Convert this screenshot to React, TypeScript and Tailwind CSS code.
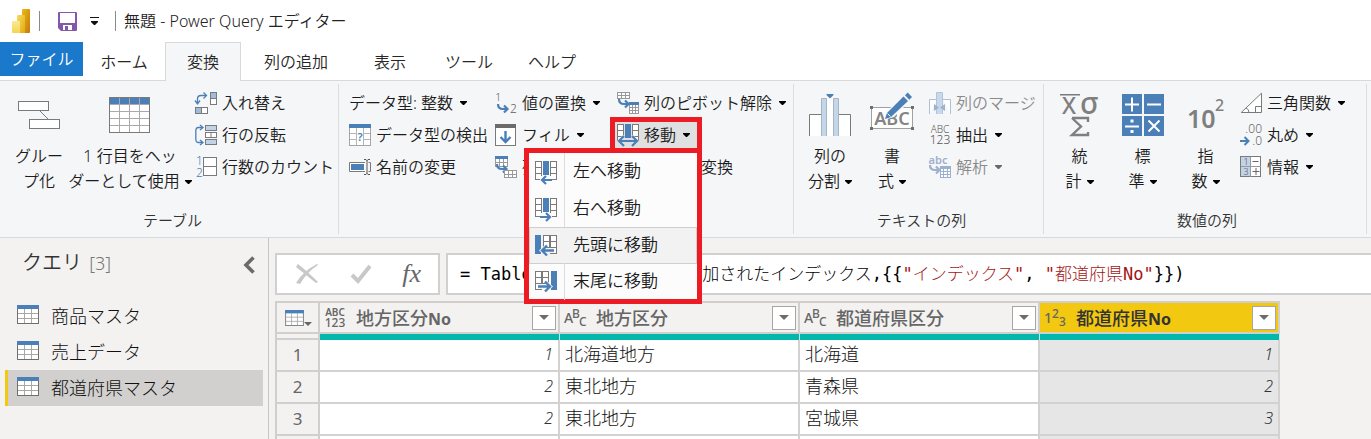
import type { ReactNode } from "react";
import clsx from "clsx";

const BLUE = "#4a7fb8";
const GRAY = "#7a7a7a";

function Svg({ w = 22, h = 22, children }: { w?: number; h?: number; children: ReactNode }) {
  return (
    <svg width={w} height={h} viewBox={`0 0 ${w} ${h}`} fill="none" aria-hidden="true" className="shrink-0 overflow-visible">
      {children}
    </svg>
  );
}

function Caret({ className = "text-black" }: { className?: string }) {
  return (
    <svg width="7" height="4" viewBox="0 0 7 4" aria-hidden="true" className={clsx("shrink-0", className)}>
      <path d="M0 0h7v1L4 4H3L0 1z" fill="currentColor" />
    </svg>
  );
}

/* ---------- title bar ---------- */

function PowerBiLogo() {
  return (
    <Svg w={18} h={24}>
      <defs>
        <linearGradient id="b1" x1="0" y1="0" x2="1" y2="1">
          <stop offset="0" stopColor="#ebbb14" />
          <stop offset="1" stopColor="#c5780c" />
        </linearGradient>
        <linearGradient id="b2" x1="0" y1="0" x2="1" y2="1">
          <stop offset="0" stopColor="#f7dc5c" />
          <stop offset="1" stopColor="#e3a90e" />
        </linearGradient>
        <linearGradient id="b3" x1="0" y1="0" x2="0" y2="1">
          <stop offset="0" stopColor="#faea98" />
          <stop offset="1" stopColor="#f5d450" />
        </linearGradient>
      </defs>
      <rect x="10" width="8" height="24" rx="1" fill="url(#b1)" />
      <path d="M6 6h6q1 0 1 1v17H5V7q0-1 1-1z" fill="url(#b2)" />
      <path d="M1 12h6q1 0 1 1v11H1q-1 0-1-1V13q0-1 1-1z" fill="url(#b3)" />
    </Svg>
  );
}

function SaveIcon() {
  return (
    <Svg w={19} h={19}>
      <path d="M1 0h17q1 0 1 1v17q0 1-1 1H3l-3-3V1q0-1 1-1z" fill="#8557ab" />
      <path d="M2 1h15v10H2z" fill="#fff" />
      <path d="M5 13h9v5H5z" fill="#fff" />
      <path d="M7 14h3v4H7z" fill="#8557ab" />
    </Svg>
  );
}

/* ---------- large ribbon icons ---------- */

function GroupIcon() {
  return (
    <Svg w={42} h={42}>
      <path d="M22 17l9 9" stroke={GRAY} />
      <rect x=".5" y="7.500" width="30" height="9" fill="#fff" stroke={GRAY} />
      <rect x="11.500" y="25.500" width="30" height="9" fill="#fff" stroke={GRAY} />
    </Svg>
  );
}

function HeaderTableIcon() {
  return (
    <Svg w={42} h={42}>
      <rect x=".5" y="3.500" width="40" height="35" fill="#fff" stroke={GRAY} />
      <path d="M1 4h39v6H1z" fill={BLUE} />
      <path d="M10.500 4v34M20.500 4v34M30.500 4v34M1 10.500h39M1 17.500h39M1 24.500h39M1 31.500h39" stroke="#a9a9a9" />
      <rect x=".5" y="3.500" width="40" height="35" stroke={GRAY} />
    </Svg>
  );
}

function SplitIcon() {
  return (
    <Svg w={42} h={42}>
      <path d="M0.500 42V20.500H12V42z" fill="#fff" />
      <path d="M30 42V20.500h11.500V42z" fill="#fff" />
      <path d="M.5 42V20.500H12M30 20.500h11.500V42" stroke={GRAY} />
      <path d="M12 5h6v37h-6zM24 5h6v37h-6z" fill="#c3d6ea" />
      <path d="M12.500 42V4.500h5V42M24.500 42V4.500h5V42" stroke="#a9b4c0" />
      <path d="M18 5h6v37h-6z" fill="#fff" />
      <path d="M17.500 0h7v1L21.500 4h-1L17.500 1z" fill={BLUE} />
    </Svg>
  );
}

function FormatIcon() {
  return (
    <Svg w={46} h={42}>
      <rect x="2.500" y="13.500" width="41" height="21" fill="#fff" stroke="#a0a0a0" />
      <path d="M1 12h3v3H1zM42 12h3v3h-3zM1 33h3v3H1zM42 33h3v3h-3z" fill="#6f6f6f" />
      <text x="23" y="31" textAnchor="middle" fontFamily="Noto Sans" fontSize="18" fontWeight="600" fill="#858585">ABC</text>
      <path d="M15 26l3-9L34 2l6 6-15 15z" fill="#f5f6f8" />
      <path d="M16 25l2-6L34.500 2.500 39 7 22 23z" fill={BLUE} />
      <path d="M36 1.200L38.700-1.500 43 3l-2.700 2.700z" fill={BLUE} />
      <path d="M18.500 19.500l3 3" stroke="#fff" />
    </Svg>
  );
}

function StatsIcon() {
  return (
    <Svg w={42} h={42}>
      <path d="M1 .75h20" stroke={GRAY} strokeWidth="1.500" />
      <text x="3" y="20" fontFamily="Noto Sans" fontSize="23" fontWeight="500" fill="#7f7f7f">X</text>
      <text x="21" y="20" fontFamily="Noto Sans" fontSize="30" fontWeight="500" fill="#7f7f7f">σ</text>
      <path d="M13 24h16v4M29 38v3H13l9-8.500L13 24" stroke="#7f7f7f" strokeWidth="2.400" />
    </Svg>
  );
}

function StandardIcon() {
  return (
    <Svg w={42} h={42}>
      <path d="M0 0h20v20H0zM22 0h20v20H22zM0 22h20v20H0zM22 22h20v20H22z" fill={BLUE} />
      <path d="M10 3.500v14M3 10.500h14M25 10.500h14M3 32.500h14M26.500 26.500l11 11M37.500 26.500l-11 11" stroke="#fff" strokeWidth="2" />
      <path d="M8.500 25.500h3v3h-3zM8.500 36h3v3h-3z" fill="#fff" />
    </Svg>
  );
}

function PowerIcon() {
  return (
    <Svg w={42} h={42}>
      <text x="2" y="34" fontFamily="Noto Sans" fontSize="25" fontWeight="600" fill="#7f7f7f">10</text>
      <text x="30" y="17" fontFamily="Noto Sans" fontSize="16" fontWeight="500" fill="#7f7f7f">2</text>
    </Svg>
  );
}

/* ---------- small ribbon icons ---------- */

function TransposeIcon() {
  return (
    <Svg>
      <path d="M2.500 11V7Q2.500 3.500 6 3.500h5" stroke={BLUE} strokeWidth="1.300" />
      <path d="M0 8.500L2.500 12 5 8.500M8.500.5l3 3-3 3" stroke={BLUE} strokeWidth="1.300" />
      <rect x="15.500" y=".5" width="6" height="12" fill="#fff" stroke={GRAY} />
      <path d="M16 1h5v5h-5z" fill="#9fbcdb" />
      <path d="M15 6.500h7" stroke={GRAY} />
      <rect x=".5" y="15.500" width="12" height="6" fill="#fff" stroke={GRAY} />
      <path d="M1 16h5v5H1z" fill="#9fbcdb" />
      <path d="M6.500 15v7" stroke={GRAY} />
    </Svg>
  );
}

function ReverseIcon() {
  return (
    <Svg>
      <path d="M7 3.500H3.500Q.8 3.500.8 7v8q0 3.500 2.700 3.500H7" stroke={BLUE} strokeWidth="1.300" />
      <path d="M5 1l3 2.500L5 6M5 16l3 2.500L5 21" stroke={BLUE} strokeWidth="1.300" />
      <rect x="10.500" y="1.500" width="11" height="5" fill="#c1d3e7" stroke={GRAY} />
      <rect x="10.500" y="8.500" width="11" height="5" fill="#fff" stroke={GRAY} />
      <path d="M16 8v6" stroke={GRAY} />
      <rect x="10.500" y="15.500" width="11" height="5" fill="#c1d3e7" stroke={GRAY} />
    </Svg>
  );
}

function CountIcon() {
  return (
    <Svg>
      <text x="1" y="9" fontFamily="Noto Sans" fontSize="12" fill={BLUE}>1</text>
      <text x="1" y="21" fontFamily="Noto Sans" fontSize="12" fill={BLUE}>2</text>
      <rect x="8.500" y="1.500" width="13" height="18" fill="#fff" stroke={GRAY} />
      <path d="M8 10.500h14" stroke={GRAY} />
    </Svg>
  );
}

function DetectIcon() {
  return (
    <Svg>
      <rect x=".5" y="1.500" width="21" height="20" fill="#fff" stroke="#a5a5a5" />
      <path d="M7.500 4v17M14.500 4v17M1 9.500h20M1 15.500h20" stroke="#b5b5b5" />
      <path d="M0 0h22v4H0z" fill={BLUE} />
      <path d="M8 7h6v12H8z" fill="#fff" />
      <text x="11" y="17" textAnchor="middle" fontFamily="Noto Sans" fontSize="11" fontWeight="600" fill={BLUE}>?</text>
    </Svg>
  );
}

function RenameIcon() {
  return (
    <Svg>
      <path d="M16 6.500H.5v9H16" fill="#fff" stroke={GRAY} />
      <path d="M2 8h13v6H2z" fill={BLUE} />
      <path d="M15 3.500h2l1 1 1-1h2M15 18.500h2l1-1 1 1h2M18 4v14" stroke="#555" />
      <path d="M19.500 6.500h2v9h-2" stroke={GRAY} />
    </Svg>
  );
}

function CurvedArrow({ x, y, color = BLUE }: { x: number; y: number; color?: string }) {
  return (
    <g transform={`translate(${x} ${y})`}>
      <path d="M1 0q0 5 5 5h4" stroke={color} strokeWidth="2.200" />
      <path d="M7 1.500l3.500 3.500L7 8.500" stroke={color} strokeWidth="2.200" />
    </g>
  );
}

function ReplaceIcon() {
  return (
    <Svg>
      <text x="0" y="9" fontFamily="Noto Sans" fontSize="11" fill="#5f5f5f">1</text>
      <text x="15" y="21" fontFamily="Noto Sans" fontSize="12" fill="#5f5f5f">2</text>
      <CurvedArrow x={2} y={12} />
    </Svg>
  );
}

function FillIcon() {
  return (
    <Svg>
      <rect x=".5" y=".5" width="20" height="21" fill="#fff" stroke={GRAY} />
      <path d="M0 0h21v4H0z" fill="#6b6b6b" />
      <path d="M10.500 7v11M5.500 13l5 5 5-5" stroke={BLUE} strokeWidth="2.400" />
    </Svg>
  );
}

function PivotIcon() {
  return (
    <Svg>
      <rect x=".5" y="1.500" width="12" height="9" fill="#fff" stroke="#999" />
      <path d="M4.500 3v8M8.500 3v8M1 6.500h12" stroke="#999" />
      <path d="M0 0h13v3H0z" fill={BLUE} />
      <CurvedArrow x={1} y={8} />
      <rect x="9.500" y="14.500" width="12" height="7" fill="#fff" stroke="#999" />
      <path d="M13.500 15v7M17.500 15v7M10 18.500h12" stroke="#999" />
    </Svg>
  );
}

function UnpivotIcon() {
  return (
    <Svg>
      <rect x=".5" y=".5" width="12" height="6" fill="#fff" stroke="#999" />
      <path d="M4.500 0v7M8.500 0v7M0 3.500h13" stroke="#999" />
      <CurvedArrow x={1} y={7} />
      <rect x="12.500" y="11.500" width="9" height="10" fill="#fff" stroke="#999" />
      <path d="M15.500 12v10M18.500 12v10M13 15.500h9M13 18.500h9" stroke="#999" />
      <path d="M12 10h10v3H12z" fill={BLUE} />
    </Svg>
  );
}

function SideCells({ x }: { x: number }) {
  return (
    <g stroke={GRAY}>
      <rect x={x + 0.5} y=".5" width="6" height="18" fill="#fff" />
      <path d={`M${x} 6.500h7M${x} 12.500h7`} />
    </g>
  );
}

function MoveIcon({ dir }: { dir: "both" | "left" | "right" }) {
  return (
    <Svg>
      <SideCells x={0} />
      <SideCells x={15} />
      <path d="M8 0h6v14H8z" fill={BLUE} />
      {dir === "both" && (
        <>
          <path d="M0 17l6-6h2v3h6v-3h2l6 6v5H0z" fill="#dfe0e0" />
          <path d="M2 17h18M7 12l-5 5 5 5M15 12l5 5-5 5" stroke={BLUE} strokeWidth="2.200" />
        </>
      )}
      {dir === "left" && (
        <>
          <path d="M5 15h12v7H5z" fill="#fcfcfc" />
          <path d="M7 19h10M11 15l-4 4 4 4" stroke={BLUE} strokeWidth="2.200" />
        </>
      )}
      {dir === "right" && (
        <>
          <path d="M5 15h12v7H5z" fill="#fcfcfc" />
          <path d="M5 19h10M11 15l4 4-4 4" stroke={BLUE} strokeWidth="2.200" />
        </>
      )}
    </Svg>
  );
}

function MoveEndIcon({ dir }: { dir: "start" | "end" }) {
  return (
    <Svg>
      <g transform={dir === "end" ? "translate(22 0) scale(-1 1)" : undefined}>
        <path d="M0 0h6v19H0z" fill={BLUE} />
        <rect x="8.500" y=".5" width="6" height="12" fill="#fff" stroke={GRAY} />
        <rect x="15.500" y=".5" width="6" height="18" fill="#fff" stroke={GRAY} />
        <path d="M8 6.500h14M15 12.500h7" stroke={GRAY} />
        <path d="M4 15.500L11 9v4h8v5h-8v4z" fill="#f4f4f4" />
        <path d="M7 15.500h12M12 10.500l-5 5 5 5" stroke={BLUE} strokeWidth="2.400" />
      </g>
    </Svg>
  );
}

function MergeIcon() {
  return (
    <Svg>
      <path d="M.5 22V7.500H8M14 7.500h7.500V22" fill="#fff" stroke="#aebfd6" />
      <path d="M7.500 22V.5h6V22" fill="#c9d8ea" stroke="#b3c4da" />
      <path d="M5 12v7l5-3.500zM16 12v7l-5-3.500z" fill="#9db3cf" />
    </Svg>
  );
}

function ExtractIcon() {
  return (
    <Svg>
      <text x="11" y="9" textAnchor="middle" fontFamily="Noto Sans" fontSize="10" fill="#555">ABC</text>
      <text x="11" y="20" textAnchor="middle" fontFamily="Noto Sans" fontSize="12" fill="#555">123</text>
    </Svg>
  );
}

function ParseIcon() {
  return (
    <Svg>
      <text x="9" y="8" textAnchor="middle" fontFamily="Noto Sans" fontSize="11" fontWeight="600" fill="#9db0cd">abc</text>
      <CurvedArrow x={0} y={9} color="#9db0cd" />
      <rect x="11.500" y="11.500" width="10" height="10" fill="#fff" stroke="#9db0cd" />
      <path d="M14.500 12v10M18.500 12v10M12 15.500h10M12 18.500h10" stroke="#9db0cd" />
      <path d="M11 10h11v3H11z" fill="#9db0cd" />
    </Svg>
  );
}

function TrigIcon() {
  return (
    <Svg>
      <path d="M1.200 20.500L21.500 1.200v19.300z" fill="#fff" stroke={GRAY} />
      <path d="M15.500 20v-5.500h6M6 16q3 1 3 4.500" stroke={GRAY} />
    </Svg>
  );
}

function RoundIcon() {
  return (
    <Svg>
      <text x="22" y="9" textAnchor="end" fontFamily="Noto Sans" fontSize="12" fill="#666">.00</text>
      <text x="22" y="21" textAnchor="end" fontFamily="Noto Sans" fontSize="12" fill="#666">.0</text>
      <path d="M0 17h8M4.500 13l4 4-4 4" stroke={BLUE} strokeWidth="2" />
    </Svg>
  );
}

function InfoIcon() {
  return (
    <Svg>
      <rect x=".5" y=".5" width="20" height="20" fill="#fff" stroke={GRAY} />
      <path d="M1 1h10v19H1z" fill="#c1d3e7" />
      <path d="M10.500 1v20M1 10.500h20" stroke="#9a9a9a" />
      <text x="6" y="9" textAnchor="middle" fontFamily="Noto Sans" fontSize="9" fill="#555">1</text>
      <text x="6" y="19" textAnchor="middle" fontFamily="Noto Sans" fontSize="9" fill="#555">3</text>
      <path d="M12.500 5.500h6M12.500 15.500h7M16 12v7" stroke="#666" />
    </Svg>
  );
}

/* ---------- table glyphs ---------- */

function QueryIcon({ w = 22, h = 19 }: { w?: number; h?: number }) {
  return (
    <svg width={w} height={h} viewBox="0 0 22 19" fill="none" aria-hidden="true" className="shrink-0">
      <rect x=".5" y=".5" width="21" height="18" fill="#fff" stroke="#6f6f6f" />
      <path d="M7.500 4v14M14.500 4v14M1 8.500h20M1 13.500h20" stroke="#a8a8a8" />
      <path d="M0 0h22v4H0z" fill={BLUE} />
    </svg>
  );
}

type Kind = "any" | "text" | "int";

function TypeIcon({ kind }: { kind: Kind }) {
  if (kind === "any") {
    return (
      <Svg w={23} h={22}>
        <text x="11" y="9" textAnchor="middle" fontFamily="Noto Sans" fontSize="10" fontWeight="600" fill="#666">ABC</text>
        <text x="11" y="20" textAnchor="middle" fontFamily="Noto Sans" fontSize="12" fontWeight="500" fill="#666">123</text>
      </Svg>
    );
  }
  const [a, b, c] = kind === "text" ? ["A", "B", "C"] : ["1", "2", "3"];
  return (
    <Svg w={23} h={22}>
      <text x="0" y="16" fontFamily="Noto Sans" fontSize="14" fontWeight="500" fill="#666">{a}</text>
      <text x="8" y="11" fontFamily="Noto Sans" fontSize="12" fontWeight="500" fill="#666">{b}</text>
      <text x="15" y="19" fontFamily="Noto Sans" fontSize="12" fontWeight="500" fill="#666">{c}</text>
    </Svg>
  );
}

/* ---------- ribbon parts ---------- */

function RibbonGroup({ label, title, className, children }: { label: string; title?: string; className: string; children: ReactNode }) {
  return (
    <section
      aria-label={label}
      className={clsx("my-[3px] flex shrink-0 flex-col border-r border-[#dcdddf]", className)}
    >
      <div className="flex flex-1 items-start">{children}</div>
      {title && <h2 className="mt-3.5 mb-0.5 text-center text-[15px] leading-6 text-[#333]">{title}</h2>}
    </section>
  );
}

function LargeButton({ icon, lines, menu, className }: { icon: ReactNode; lines: [string, string]; menu?: boolean; className: string }) {
  return (
    <button type="button" className={clsx("mt-2.5 flex shrink-0 flex-col items-center whitespace-nowrap leading-[25px]", className)}>
      <span className="mb-2">{icon}</span>
      <span>{lines[0]}</span>
      <span className="flex items-center gap-[5px]">
        {lines[1]}
        {menu && <Caret />}
      </span>
    </button>
  );
}

function SmallButton({ icon, label, menu, disabled }: { icon?: ReactNode; label: string; menu?: boolean; disabled?: boolean }) {
  return (
    <button
      type="button"
      disabled={disabled}
      className={clsx("flex h-8 items-center gap-[5px] whitespace-nowrap px-0.5", disabled && "text-[#8a8a8a]")}
    >
      {icon}
      <span>{label}</span>
      {menu && <Caret className={disabled ? "ml-0.5 text-[#6a6a6a]" : "ml-0.5 text-black"} />}
    </button>
  );
}

const moveItems = [
  { label: "左へ移動", icon: <MoveIcon dir="left" /> },
  { label: "右へ移動", icon: <MoveIcon dir="right" /> },
  { label: "先頭に移動", icon: <MoveEndIcon dir="start" />, active: true },
  { label: "末尾に移動", icon: <MoveEndIcon dir="end" /> },
];

function MoveMenu() {
  return (
    <div className="relative flex h-8 items-center">
      <button
        type="button"
        aria-haspopup="menu"
        aria-expanded="true"
        className="flex h-[26px] w-[82px] items-center gap-[5px] whitespace-nowrap bg-[#dfe0e0] px-0.5 ring-[5px] ring-[#ed1c24]"
      >
        <MoveIcon dir="both" />
        <span>移動</span>
        <Caret className="ml-0.5 text-black" />
      </button>
      <div role="menu" className="absolute -right-[5px] top-[29px] z-10 w-[178px] border-[5px] border-[#ed1c24] bg-[#fcfcfc] text-[17px]">
        {moveItems.map((item) => (
          <button
            key={item.label}
            type="button"
            role="menuitem"
            className={clsx(
              "flex h-[37px] w-full items-center border whitespace-nowrap last:h-[35px]",
              item.active ? "border-[#cfcfcf] bg-[#f2f2f2]" : "border-transparent",
            )}
          >
            <span className={clsx("flex h-[37px] w-[35px] items-center border-r pl-[5px]", item.active ? "border-transparent" : "border-[#dcdcdc]")}>
              {item.icon}
            </span>
            <span className="pb-0.5 pl-2">{item.label}</span>
          </button>
        ))}
      </div>
    </div>
  );
}

function Ribbon() {
  return (
    <div className="flex border-b border-[#d5dade] bg-[#f5f6f8] text-base">
      <RibbonGroup label="テーブル" title="テーブル" className="w-[339px] pl-[7px]">
        <LargeButton className="w-16" icon={<GroupIcon />} lines={["グルー", "プ化"]} />
        <LargeButton className="w-[118px]" icon={<HeaderTableIcon />} lines={["1 行目をヘッ", "ダーとして使用"]} menu />
        <div className="ml-1 mt-[3px] flex flex-col items-start">
          <SmallButton icon={<TransposeIcon />} label="入れ替え" />
          <SmallButton icon={<ReverseIcon />} label="行の反転" />
          <SmallButton icon={<CountIcon />} label="行数のカウント" />
        </div>
      </RibbonGroup>

      <RibbonGroup label="任意の列" className="w-[455px] pl-2">
        <div className="mt-[3px] grid grid-cols-[146px_122px_auto] justify-items-start">
          <SmallButton label="データ型: 整数" menu />
          <SmallButton icon={<ReplaceIcon />} label="値の置換" menu />
          <SmallButton icon={<UnpivotIcon />} label="列のピボット解除" menu />
          <SmallButton icon={<DetectIcon />} label="データ型の検出" />
          <SmallButton icon={<FillIcon />} label="フィル" menu />
          <MoveMenu />
          <SmallButton icon={<RenameIcon />} label="名前の変更" />
          <SmallButton icon={<PivotIcon />} label="列のピボット" />
          <button type="button" aria-label="リストに変換" className="h-8 w-[118px] text-right">
            変換
          </button>
        </div>
      </RibbonGroup>

      <RibbonGroup label="テキストの列" title="テキストの列" className="w-[250px] pl-1.5">
        <LargeButton className="w-[60px]" icon={<SplitIcon />} lines={["列の", "分割"]} menu />
        <LargeButton className="w-16" icon={<FormatIcon />} lines={["書", "式"]} menu />
        <div className="ml-[3px] mt-[3px] flex flex-col items-start">
          <SmallButton icon={<MergeIcon />} label="列のマージ" disabled />
          <SmallButton icon={<ExtractIcon />} label="抽出" menu />
          <SmallButton icon={<ParseIcon />} label="解析" menu disabled />
        </div>
      </RibbonGroup>

      <RibbonGroup label="数値の列" title="数値の列" className="w-[323px] pl-1">
        <LargeButton className="w-[63px]" icon={<StatsIcon />} lines={["統", "計"]} menu />
        <LargeButton className="w-[63px]" icon={<StandardIcon />} lines={["標", "準"]} menu />
        <LargeButton className="w-[63px]" icon={<PowerIcon />} lines={["指", "数"]} menu />
        <div className="ml-px mt-[3px] flex flex-col items-start">
          <SmallButton icon={<TrigIcon />} label="三角関数" menu />
          <SmallButton icon={<RoundIcon />} label="丸め" menu />
          <SmallButton icon={<InfoIcon />} label="情報" menu />
        </div>
      </RibbonGroup>
    </div>
  );
}

/* ---------- tabs ---------- */

const tabs = [
  { label: "ホーム", width: "w-[82px]" },
  { label: "変換", width: "w-[76px]", active: true },
  { label: "列の追加", width: "w-[110px]" },
  { label: "表示", width: "w-[78px]" },
  { label: "ツール", width: "w-[80px]" },
  { label: "ヘルプ", width: "w-[86px]" },
];

function Tabs() {
  return (
    <div role="tablist" className="flex h-[39px] shrink-0 items-start text-base shadow-[inset_0_-1px_0_#d8d9db]">
      <button type="button" role="tab" className="h-[34px] w-[83px] bg-[#1a79cb] text-white">
        ファイル
      </button>
      {tabs.map((t) => (
        <button
          key={t.label}
          type="button"
          role="tab"
          aria-selected={!!t.active}
          className={clsx(
            "h-[39px] whitespace-nowrap text-[#262626]",
            t.width,
            t.active && "border-x border-t border-[#d8d9db] bg-[#f5f6f8]",
          )}
        >
          {t.label}
        </button>
      ))}
    </div>
  );
}

/* ---------- body ---------- */

const queries = ["商品マスタ", "売上データ", "都道府県マスタ"];

function QueryPane() {
  return (
    <aside className="w-[269px] shrink-0 border-r border-[#c8c6c4]">
      <div className="flex h-[50px] items-center justify-between pl-[22px] pr-[13px]">
        <h2 className="text-xl text-[#333]">
          クエリ <span className="ml-0.5 text-lg font-light text-[#777]">[3]</span>
        </h2>
        <button type="button" aria-label="折りたたむ" className="mt-1">
          <Svg w={12} h={18}>
            <path d="M10.500 1.500L3 9l7.500 7.500" stroke="#6b6b6b" strokeWidth="3.600" />
          </Svg>
        </button>
      </div>
      <ul className="mt-2.5 px-[5px]">
        {queries.map((q, i) => (
          <li key={q}>
            <button
              type="button"
              className={clsx(
                "flex h-9 w-full items-center gap-3 border-l-[3px] pl-[9px] text-lg font-light text-[#111]",
                i === 2 ? "border-[#f2c811] bg-[#d2d0ce]" : "border-transparent",
              )}
            >
              <span className="pb-1">
                <QueryIcon />
              </span>
              {q}
            </button>
          </li>
        ))}
      </ul>
    </aside>
  );
}

function FormulaBar() {
  return (
    <div className="flex h-[42px] shrink-0 gap-1.5">
      <div className="flex w-[165px] shrink-0 items-center justify-between border-2 border-[#d0d0d0] bg-white pl-[18px] pr-[17px]">
        <button type="button" aria-label="キャンセル">
          <Svg w={24} h={22}>
            <path d="M3 1q9 7 20 18l-2 1Q11 12 1 4z" fill="#c8c8c8" />
            <path d="M23 2Q12 9 5 21l-4-1Q8 8 22 1z" fill="#c8c8c8" />
          </Svg>
        </button>
        <button type="button" aria-label="確定">
          <Svg w={22} h={20}>
            <path d="M2 11l6 6L20 2" stroke="#c8c8c8" strokeWidth="4" />
          </Svg>
        </button>
        <button type="button" className="font-['Liberation_Serif',serif] text-[26px] leading-8 text-[#666] italic">
          fx
        </button>
      </div>
      <div
        role="textbox"
        aria-label="数式"
        className="flex-1 overflow-hidden border-2 border-r-0 border-[#d0d0d0] bg-white pl-3 font-['DejaVu_Sans_Mono','Noto_Sans_CJK_JP',monospace] text-[17px] leading-[38px] font-light whitespace-pre text-black"
      >
        = Table.RenameColumns(追加されたインデックス,{"{{"}
        <span className="text-[#a31515]">"インデックス"</span>, <span className="text-[#a31515]">"都道府県No"</span>
        {"}})"}
      </div>
    </div>
  );
}

const columns: { name: string; kind: Kind; selected?: boolean }[] = [
  { name: "地方区分No", kind: "any" },
  { name: "地方区分", kind: "text" },
  { name: "都道府県区分", kind: "text" },
  { name: "都道府県No", kind: "int", selected: true },
];

const rows = [
  ["1", "北海道地方", "北海道", "1"],
  ["2", "東北地方", "青森県", "2"],
  ["2", "東北地方", "宮城県", "3"],
];

function DataTable() {
  return (
    <table className="mt-1.5 w-[1005px] table-fixed border-separate border-spacing-0 border-t-2 border-[#d0cfce]">
      <colgroup>
        <col className="w-[45px]" />
        <col />
        <col />
        <col />
        <col />
      </colgroup>
      <thead>
        <tr>
          <th className="border-x-2 border-b-2 border-[#d0cfce] p-0">
            <button type="button" aria-label="テーブル メニュー" className="flex h-[29px] w-full items-center pl-2">
              <QueryIcon w={19} h={16} />
              <svg width="8" height="4" viewBox="0 0 8 4" aria-hidden="true" className="mt-3 shrink-0">
                <path d="M0 0h8L4 4z" fill="#666" />
              </svg>
            </button>
          </th>
          {columns.map((c) => (
            <th
              key={c.name}
              scope="col"
              className={clsx("border-r-2 border-b-2 border-[#d0cfce] p-0", c.selected && "bg-[#f2c811]")}
            >
              <div className="flex h-[29px] items-center pl-1 pr-0.5">
                <TypeIcon kind={c.kind} />
                <span className={clsx("ml-[9px] text-lg leading-7 font-medium", c.selected ? "text-[#333]" : "text-[#666]")}>
                  {c.name.replace("No", "")}
                  {c.name.endsWith("No") && <b className="text-base">No</b>}
                </span>
                <button
                  type="button"
                  aria-label={`${c.name} フィルター`}
                  className="ml-auto flex size-6 items-center justify-center border border-[#a6a6a6] bg-white"
                >
                  <svg width="10" height="5" viewBox="0 0 10 5" aria-hidden="true">
                    <path d="M0 0h10L5 5z" fill="#6b6b6b" />
                  </svg>
                </button>
              </div>
            </th>
          ))}
        </tr>
        <tr aria-hidden="true">
          <td className="border-x-2 border-b-2 border-[#d0cfce] p-0" />
          {columns.map((c) => (
            <td key={c.name} className="border-r border-[#d8e8e6] bg-[#01b8aa] p-0">
              <div className="h-1.5" />
            </td>
          ))}
        </tr>
      </thead>
      <tbody>
        {rows.map((r, i) => (
          <tr key={i}>
            <th scope="row" className="border-x-2 border-b-2 border-[#d0cfce] p-0 text-[17px] font-normal text-[#666]">
              {i + 1}
            </th>
            {r.map((v, j) => (
              <td
                key={j}
                className={clsx(
                  "border-r-2 border-b-2 border-[#d3d2d1] px-[5px] py-0",
                  j === 3 ? "bg-[#e6e6e6]" : "bg-white",
                  j === 0 || j === 3 ? "text-right text-base text-[#333] italic" : "text-lg font-light text-[#111]",
                )}
              >
                <div className="h-[30px] leading-[29px]">{v}</div>
              </td>
            ))}
          </tr>
        ))}
        <tr>
          <th scope="row" className="border-x-2 border-[#d0cfce] p-0">
            <div className="h-7" />
          </th>
          {columns.map((c) => (
            <td key={c.name} className={clsx("border-r-2 border-[#d3d2d1] p-0", c.selected ? "bg-[#e6e6e6]" : "bg-white")} />
          ))}
        </tr>
      </tbody>
    </table>
  );
}

export default function App() {
  return (
    <div className="flex h-screen flex-col overflow-hidden bg-white font-['Noto_Sans','Noto_Sans_CJK_JP',sans-serif] font-[350] text-[#1c1c1c]">
      <header className="flex h-[42px] shrink-0 items-center pl-3">
        <PowerBiLogo />
        <span className="ml-[9px] h-5 w-px bg-[#8a8a8a]" />
        <button type="button" aria-label="保存" className="ml-[18px]">
          <SaveIcon />
        </button>
        <button type="button" aria-label="クイック アクセス" className="ml-[13px]">
          <Svg w={9} h={8}>
            <path d="M0 0h9v1H0zM1 4h7v1L5 8H4L1 5z" fill="#111" />
          </Svg>
        </button>
        <span className="ml-4 h-5 w-px bg-[#8a8a8a]" />
        <h1 className="ml-2 text-base text-[#222]">無題 - Power Query エディター</h1>
      </header>
      <Tabs />
      <div className="shrink-0">
        <Ribbon />
      </div>
      <div className="flex min-h-0 flex-1 bg-[#f3f2f1]">
        <QueryPane />
        <main className="flex min-w-0 flex-1 flex-col overflow-hidden pl-1.5 pt-[15px]">
          <FormulaBar />
          <DataTable />
        </main>
      </div>
    </div>
  );
}
